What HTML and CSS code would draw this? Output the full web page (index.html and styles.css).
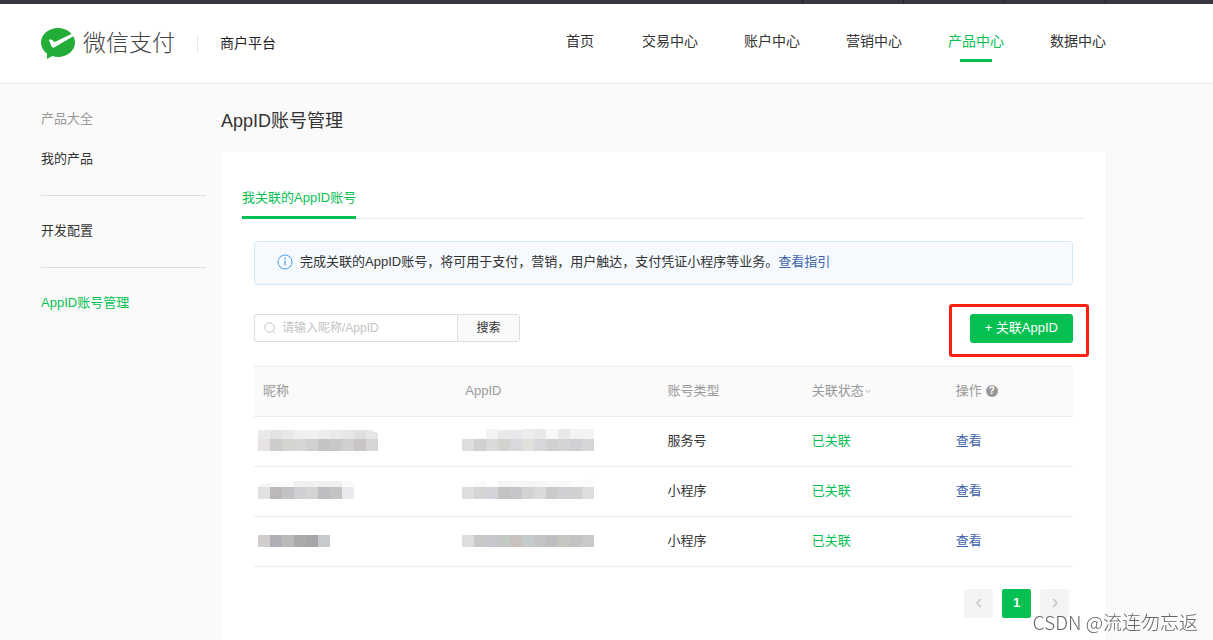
FILE: index.html
```html
<!DOCTYPE html>
<html lang="zh-CN">
<head>
<meta charset="utf-8">
<meta name="viewport" content="width=device-width, initial-scale=1">
<title>AppID账号管理</title>
<link rel="stylesheet" href="styles.css">
</head>
<body>
<div class="topbar"><i></i><i></i><i></i><i></i></div>
<header class="header">
  <a class="brand" href="#">
    <svg class="brand-icon" viewBox="0 0 34 32" aria-hidden="true">
      <path fill="#22ac38" d="M17 0C7.600 0 0 6.500 0 14.500c0 4.600 2.300 8.500 6.200 11.200L5.700 31l5.700-2.900c1.800.6 3.600.9 5.600.9 9.400 0 17-6.500 17-14.500S26.400 0 17 0z"/>
      <path fill="#fff" d="M8 12.200c.6-1.300 1.800-1 2.600-.4l3.100 2.300L31 5.700l1.700 2.200L13.500 19.300c-1.300.8-2.300.5-2.900-.7z"/>
    </svg>
    <span class="brand-name">微信支付</span>
  </a>
  <span class="platform">商户平台</span>
  <nav class="nav">
    <a href="#">首页</a>
    <a href="#">交易中心</a>
    <a href="#">账户中心</a>
    <a href="#">营销中心</a>
    <a href="#" class="active">产品中心</a>
    <a href="#">数据中心</a>
  </nav>
</header>
<div class="page">
  <aside class="sidebar">
    <p class="muted">产品大全</p>
    <a href="#">我的产品</a>
    <hr>
    <a href="#">开发配置</a>
    <hr>
    <a href="#" class="active">AppID账号管理</a>
  </aside>
  <main class="main">
    <h1>AppID账号管理</h1>
    <section class="card">
      <div class="tabs"><a href="#" class="tab">我关联的AppID账号</a></div>
      <div class="content">
        <div class="alert">
          <svg class="alert-icon" viewBox="0 0 16 16" aria-hidden="true"><circle cx="8" cy="8" r="7" fill="none" stroke="#459ae9"/><path d="M8 6.500v5" stroke="#459ae9" stroke-width="1.200"/><circle cx="8" cy="4.400" r=".8" fill="#459ae9"/></svg>
          <span>完成关联的AppID账号，将可用于支付，营销，用户触达，支付凭证小程序等业务。</span>
          <a href="#">查看指引</a>
        </div>
        <div class="toolbar">
          <form class="search">
            <label class="search-field">
              <svg viewBox="0 0 12 12" aria-hidden="true"><circle cx="5.500" cy="5.500" r="4.700" fill="none" stroke="#c4c4c4"/><path d="M9 9l2 2" stroke="#c4c4c4"/></svg>
              <input type="text" placeholder="请输入昵称/AppID" aria-label="昵称/AppID">
            </label>
            <button type="button">搜索</button>
          </form>
          <div class="action">
            <button type="button" class="primary">+ 关联AppID</button>
            <span class="marker"></span>
          </div>
        </div>
        <table>
          <colgroup><col class="c-name"><col class="c-id"><col class="c-type"><col class="c-state"><col></colgroup>
          <thead>
            <tr>
              <th>昵称</th>
              <th>AppID</th>
              <th>账号类型</th>
              <th>关联状态<svg class="caret" viewBox="0 0 8 8" aria-hidden="true"><path d="M1.500 3L4 5.500 6.500 3" fill="none" stroke="#b8b8b8"/></svg></th>
              <th>操作<span class="help">?</span></th>
            </tr>
          </thead>
          <tbody>
            <tr>
              <td class="mask-name"><svg width="120" height="24" shape-rendering="crispEdges" aria-hidden="true">
                <rect x="0" y="1" width="12" height="9" fill="#ebe9ea"/><rect x="12" y="1" width="12" height="9" fill="#e1e4e2"/><rect x="24" y="1" width="12" height="9" fill="#e8e8e6"/><rect x="36" y="1" width="24" height="9" fill="#f1eff0"/><rect x="60" y="1" width="12" height="9" fill="#efeeec"/><rect x="72" y="1" width="12" height="9" fill="#e9ebea"/><rect x="84" y="1" width="12" height="9" fill="#e6e6e6"/><rect x="96" y="1" width="12" height="9" fill="#e0e0e0"/><path d="M108 1h5l7 3v6h-12z" fill="#e7e7e7"/>
                <rect x="0" y="10" width="12" height="12" fill="#e7e2e4"/><rect x="12" y="10" width="12" height="12" fill="#cccccf"/><rect x="24" y="10" width="12" height="12" fill="#d5d4d1"/><rect x="36" y="10" width="12" height="12" fill="#d6d6d7"/><rect x="48" y="10" width="12" height="12" fill="#d0d0d1"/><rect x="60" y="10" width="12" height="12" fill="#c4c4c2"/><rect x="72" y="10" width="12" height="12" fill="#c7c8c8"/><rect x="84" y="10" width="12" height="12" fill="#cdd0cf"/><rect x="96" y="10" width="12" height="12" fill="#c9c5c7"/><rect x="108" y="10" width="12" height="12" fill="#d4d6d8"/></svg></td>
              <td class="mask-id"><svg width="132" height="24" shape-rendering="crispEdges" aria-hidden="true">
                <rect x="24" y="0" width="12" height="10" fill="#f3f3f1"/><rect x="36" y="1" width="12" height="9" fill="#e9e9ea"/><rect x="48" y="1" width="12" height="9" fill="#e7e8eb"/><rect x="60" y="0" width="12" height="10" fill="#eeecea"/><rect x="72" y="0" width="12" height="10" fill="#e9e9e9"/><rect x="84" y="0" width="12" height="10" fill="#f8faf9"/><rect x="96" y="0" width="12" height="10" fill="#e9e9e8"/><rect x="108" y="0" width="24" height="10" fill="#f2f3f3"/>
                <rect x="0" y="10" width="12" height="12" fill="#dededf"/><rect x="12" y="10" width="12" height="12" fill="#d0d0d1"/><rect x="24" y="10" width="12" height="12" fill="#dadada"/><rect x="36" y="10" width="12" height="12" fill="#d4d3ce"/><rect x="48" y="10" width="12" height="12" fill="#d7d9dc"/><rect x="60" y="10" width="12" height="12" fill="#e0dfda"/><rect x="72" y="10" width="12" height="12" fill="#d5d7da"/><rect x="84" y="10" width="12" height="12" fill="#cfd1d0"/><rect x="96" y="10" width="12" height="12" fill="#d6d4d2"/><rect x="108" y="10" width="12" height="12" fill="#cfd0d3"/><rect x="120" y="10" width="12" height="12" fill="#d5d6d8"/></svg></td>
              <td>服务号</td>
              <td class="linked">已关联</td>
              <td><a href="#">查看</a></td>
            </tr>
            <tr>
              <td class="mask-name"><svg width="120" height="24" shape-rendering="crispEdges" aria-hidden="true">
                <path d="M0 6l12-2v4H0z" fill="#f3f3f3"/><rect x="12" y="3" width="24" height="5" fill="#fafafa"/><rect x="36" y="2" width="48" height="6" fill="#f0f0f0"/><rect x="84" y="2" width="12" height="6" fill="#fafafa"/>
                <rect x="0" y="8" width="12" height="12" fill="#e1e1df"/><rect x="12" y="8" width="12" height="12" fill="#bdb8b8"/><rect x="24" y="8" width="12" height="12" fill="#c2c3c5"/><rect x="36" y="8" width="12" height="12" fill="#cfd0d3"/><rect x="48" y="8" width="12" height="12" fill="#d4d4d4"/><rect x="60" y="8" width="12" height="12" fill="#bcbdc0"/><rect x="72" y="8" width="12" height="12" fill="#c3c3c3"/><rect x="84" y="8" width="12" height="12" fill="#e9eaed"/></svg></td>
              <td class="mask-id"><svg width="132" height="24" shape-rendering="crispEdges" aria-hidden="true">
                <rect x="12" y="2" width="12" height="6" fill="#fafafa"/><rect x="36" y="2" width="48" height="6" fill="#f6f6f6"/><rect x="84" y="2" width="24" height="6" fill="#f8f8f8"/><path d="M108 2l24-2v8h-24z" fill="#fbfbfb"/>
                <rect x="0" y="8" width="12" height="12" fill="#dedede"/><rect x="12" y="8" width="12" height="12" fill="#d7d5d3"/><rect x="24" y="8" width="12" height="12" fill="#d2d4d9"/><rect x="36" y="8" width="12" height="12" fill="#c3c3c4"/><rect x="48" y="8" width="12" height="12" fill="#c5c6c9"/><rect x="60" y="8" width="12" height="12" fill="#d3d3d4"/><rect x="72" y="8" width="12" height="12" fill="#d9dbda"/><rect x="84" y="8" width="12" height="12" fill="#cacaca"/><rect x="96" y="8" width="12" height="12" fill="#d0d0d4"/><rect x="108" y="8" width="12" height="12" fill="#d0d0d0"/><rect x="120" y="8" width="12" height="12" fill="#dcdedd"/></svg></td>
              <td>小程序</td>
              <td class="linked">已关联</td>
              <td><a href="#">查看</a></td>
            </tr>
            <tr>
              <td class="mask-name"><svg width="120" height="24" shape-rendering="crispEdges" aria-hidden="true">
                <rect x="0" y="6" width="12" height="12" fill="#d2cccd"/><rect x="12" y="6" width="12" height="12" fill="#afafb5"/><rect x="24" y="6" width="12" height="12" fill="#babab8"/><rect x="36" y="6" width="12" height="12" fill="#aba9aa"/><rect x="48" y="6" width="12" height="12" fill="#a6a6a8"/><rect x="60" y="6" width="12" height="12" fill="#c6cacd"/></svg></td>
              <td class="mask-id"><svg width="132" height="24" shape-rendering="crispEdges" aria-hidden="true">
                <rect x="0" y="6" width="12" height="12" fill="#dedede"/><rect x="12" y="6" width="12" height="12" fill="#cac9c7"/><rect x="24" y="6" width="12" height="12" fill="#c7c8cd"/><rect x="36" y="6" width="12" height="12" fill="#c2c8c4"/><rect x="48" y="6" width="12" height="12" fill="#c9c1bd"/><rect x="60" y="6" width="12" height="12" fill="#c4cbcc"/><rect x="72" y="6" width="12" height="12" fill="#c6c4c2"/><rect x="84" y="6" width="12" height="12" fill="#bebfc1"/><rect x="96" y="6" width="12" height="12" fill="#c7c7c1"/><rect x="108" y="6" width="12" height="12" fill="#c3c3c3"/><rect x="120" y="6" width="12" height="12" fill="#c7cac9"/></svg></td>
              <td>小程序</td>
              <td class="linked">已关联</td>
              <td><a href="#">查看</a></td>
            </tr>
          </tbody>
        </table>
        <div class="pager">
          <button type="button" aria-label="上一页"><svg viewBox="0 0 10 10"><path d="M7 1L3 5l4 4" fill="none" stroke="#c4c4c4" stroke-width="1.500"/></svg></button>
          <button type="button" class="current">1</button>
          <button type="button" aria-label="下一页"><svg viewBox="0 0 10 10"><path d="M3 1l4 4-4 4" fill="none" stroke="#c4c4c4" stroke-width="1.500"/></svg></button>
        </div>
      </div>
    </section>
  </main>
</div>
<div class="watermark">CSDN @流连勿忘返</div>
</body>
</html>
```
FILE: styles.css
```css
* { box-sizing: border-box; }

body {
  margin: 0;
  min-height: 100vh;
  display: flex;
  flex-direction: column;
  background: #fafafa;
  color: #333;
  font: 13px/20px "Liberation Sans", "Noto Sans CJK SC", sans-serif;
}

a { color: inherit; text-decoration: none; }
button, input { font: inherit; color: inherit; }
button { cursor: pointer; }

.topbar {
  height: 4px;
  display: flex;
  justify-content: flex-end;
  gap: 100px;
  padding-right: 107px;
  background: #37363e;
}
.topbar i { width: 1px; background: #222229; }

.header {
  display: flex;
  align-items: center;
  height: 80px;
  padding: 0 107px 0 41px;
  background: #fff;
  border-bottom: 1px solid #ededed;
}
.brand { display: flex; align-items: center; gap: 8px; }
.brand-icon { width: 34px; height: 32px; }
.brand-name { padding-bottom: 2px; font-size: 23px; line-height: 30px; font-weight: 300; color: #444; }
.platform {
  margin-left: 22px;
  padding: 0 0 2px 22px;
  border-left: 1px solid #e5e5e5;
  font-size: 14px;
  line-height: 14px;
  color: #222;
}
.nav {
  display: flex;
  gap: 46px;
  margin-left: auto;
  font-size: 14px;
}
.nav a {
  display: flex;
  flex-direction: column;
  align-items: center;
  padding-top: 5px;
}
.nav a::after { content: ""; width: 32px; height: 3px; margin-top: 8px; }
.nav .active { color: #06c152; }
.nav .active::after { background: #06c152; }

.page {
  flex: 1;
  display: flex;
  gap: 15px;
  padding: 0 107px 0 41px;
}
.sidebar { flex: 0 0 165px; padding-top: 25px; }
.sidebar p { margin: 0 0 20px; }
.sidebar a { display: block; }
.sidebar hr { height: 1px; margin: 26px 0 25px; border: 0; background: #dedede; }
.sidebar .active { color: #06c152; }
.muted { color: #999; }

.main { flex: 1; display: flex; flex-direction: column; }
h1 {
  margin: 0;
  padding: 25px 0 18px;
  font-size: 18px;
  line-height: 24px;
  font-weight: 400;
}
.card {
  flex: 1;
  padding: 32px 21px 22px;
  background: #fff;
  border-radius: 3px 3px 0 0;
  box-shadow: 0 0 2px #eee;
}
.tabs { display: flex; border-bottom: 1px solid #ececec; }
.tab {
  margin-bottom: -1px;
  padding: 5px 0 9px;
  line-height: 19px;
  color: #06c152;
  border-bottom: 3px solid #06c152;
}
.content { padding: 22px 12px 0; }

.alert {
  display: flex;
  align-items: center;
  height: 44px;
  padding: 0 22px 3px;
  border: 1px solid #d3e8f9;
  border-radius: 3px;
  background: #f6faff;
}
.alert-icon { width: 16px; height: 16px; margin-right: 7px; }
.alert a, td a { color: #3f63ab; }

.toolbar {
  display: flex;
  justify-content: space-between;
  margin: 29px 0 23px;
}
.search {
  display: flex;
  height: 28px;
  border: 1px solid #dedede;
  border-radius: 3px;
}
.search-field { display: flex; align-items: center; gap: 6px; padding-left: 9px; }
.search-field svg { width: 12px; height: 12px; }
.search input { width: 175px; padding: 0; border: 0; outline: 0; background: none; font-size: 12px; }
.search input::placeholder { color: #c4c4c4; opacity: 1; }
.search button {
  width: 62px;
  padding: 0;
  border: 0;
  border-left: 1px solid #dedede;
  background: #fafafa;
  font-size: 12px;
}
.action { position: relative; }
.primary {
  display: block;
  height: 29px;
  padding: 0 15px 2px;
  border: 0;
  border-radius: 3px;
  background: #06c152;
  color: #fff;
}
.marker {
  position: absolute;
  inset: -10px -16px -14px -21px;
  border: 3px solid #ff2010;
  border-radius: 3px;
  pointer-events: none;
}

table {
  width: 100%;
  table-layout: fixed;
  border-collapse: collapse;
  border-top: 1px solid #ececec;
}
.c-name, .c-id { width: 24.700%; }
.c-type, .c-state { width: 17.600%; }
th, td {
  height: 50px;
  padding: 0 9px 2px;
  border-bottom: 1px solid #ececec;
  text-align: left;
  font-weight: 400;
}
th { background: #fafafa; color: #999; }
td svg { display: block; }
.mask-name { padding-left: 4px; }
.mask-id { padding-left: 6px; }
.linked { color: #06c152; }
.caret { width: 8px; height: 8px; }
.help {
  display: inline-block;
  width: 12px;
  height: 12px;
  margin-left: 4px;
  border-radius: 50%;
  background: #999;
  color: #fff;
  font-size: 10px;
  line-height: 12px;
  font-weight: 700;
  text-align: center;
  vertical-align: 1px;
}

.pager {
  display: flex;
  justify-content: flex-end;
  gap: 9px;
  padding: 22px 4px 0;
}
.pager button {
  display: grid;
  place-items: center;
  width: 29px;
  height: 29px;
  padding: 0 0 2px;
  border: 0;
  border-radius: 2px;
  background: #f4f4f4;
}
.pager svg { width: 10px; height: 10px; }
.pager .current { background: #06c152; color: #fff; font-weight: 700; }

.watermark {
  position: fixed;
  right: 15px;
  bottom: 6px;
  font-family: "Noto Sans CJK SC", sans-serif;
  font-size: 19px;
  line-height: 24px;
  font-weight: 300;
  color: #666;
  text-shadow: 1px 1px 0 #fff;
}
```
